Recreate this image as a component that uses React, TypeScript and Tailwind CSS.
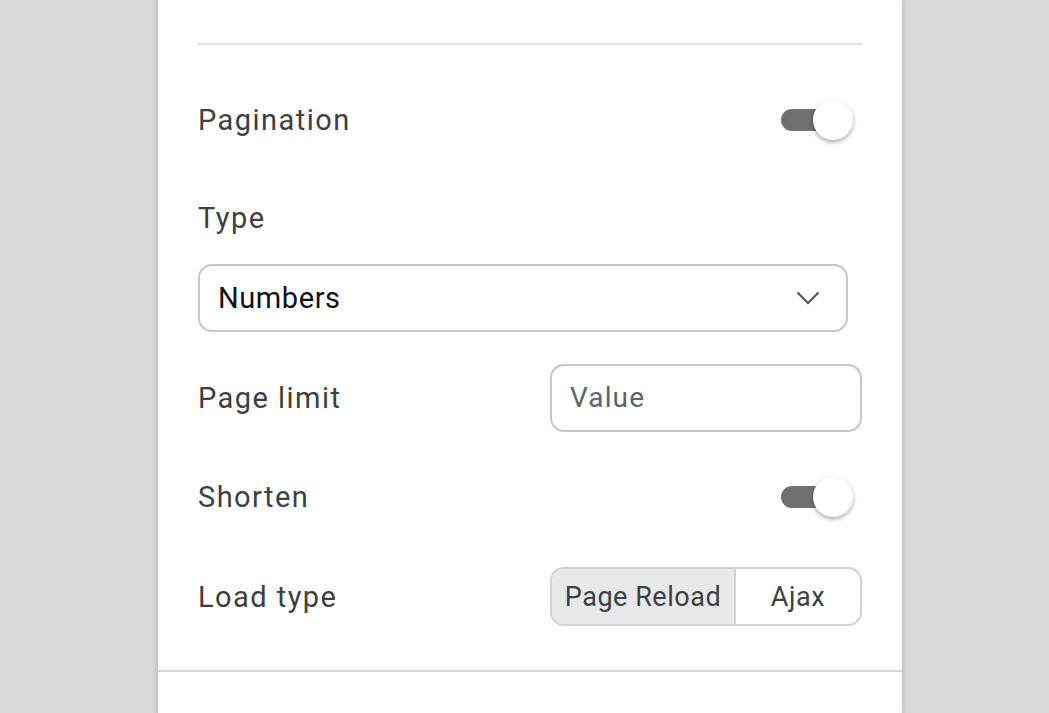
import React from "react";

function Toggle() {
  return (
    <div className="relative w-[72px] h-[44px] mr-[9px] flex items-center">
      <div className="absolute left-0 top-[11px] w-[62px] h-[22px] rounded-full bg-[#707070]" />
      <div className="absolute right-0 top-[2px] w-[40px] h-[40px] rounded-full bg-white shadow-[0_2px_4px_rgba(0,0,0,0.35)]" />
    </div>
  );
}

export default function App() {
  return (
    <div
      className="w-full h-[713px] bg-[#d9d9d9] overflow-hidden pl-[158px]"
      style={{ fontFamily: "Roboto, 'Noto Sans', sans-serif" }}
    >
      <div className="w-[744px] h-full bg-white shadow-[0_0_4px_2px_rgba(0,0,0,0.12)]">
        <div className="px-[40px] pt-[43px]">
          <div className="h-[2px] bg-[#e2e2e2]" />
          <div className="mt-[55px] h-[40px] flex items-center justify-between">
            <span className="pt-[2px] text-[29px] tracking-[0.05em] text-[#3c4043]">Pagination</span>
            <Toggle />
          </div>
          <div className="mt-[60px] h-[36px] flex items-center">
            <span className="pt-[2px] text-[29px] tracking-[0.05em] text-[#3c4043]">Type</span>
          </div>
          <div className="mt-[28px] w-[650px] h-[68px] border-2 border-[#c6c6c6] rounded-[14px] flex items-center justify-between pl-[18px] pr-[26px]">
            <span className="pt-[2px] text-[29px] tracking-[0.02em] text-[#111]">Numbers</span>
            <svg width="24" height="14" viewBox="0 0 24 14" fill="none">
              <path d="M1.5 1.5 L12 12 L22.5 1.5" stroke="#555" strokeWidth="2.2" />
            </svg>
          </div>
          <div className="mt-[32px] h-[68px] flex items-center justify-between">
            <span className="pt-[2px] text-[29px] tracking-[0.05em] text-[#3c4043]">Page limit</span>
            <div className="w-[312px] h-[68px] border-2 border-[#c6c6c6] rounded-[14px] flex items-center pl-[18px]">
              <span className="text-[28px] tracking-[0.04em] text-[#5f6368]">Value</span>
            </div>
          </div>
          <div className="mt-[45px] h-[40px] flex items-center justify-between">
            <span className="pt-[2px] text-[29px] tracking-[0.05em] text-[#3c4043]">Shorten</span>
            <Toggle />
          </div>
          <div className="mt-[50px] h-[59px] flex items-center justify-between">
            <span className="pt-[2px] text-[29px] tracking-[0.05em] text-[#3c4043]">Load type</span>
            <div className="w-[312px] h-[59px] border-2 border-[#d2d2d2] rounded-[14px] flex overflow-hidden">
              <div className="w-[184px] h-full bg-[#e8e8e8] border-r-2 border-[#d2d2d2] flex items-center justify-center">
                <span className="pt-[2px] text-[27px] tracking-[0.02em] text-[#3c4043]">Page Reload</span>
              </div>
              <div className="flex-1 h-full flex items-center justify-center">
                <span className="pt-[2px] text-[27px] tracking-[0.02em] text-[#3c4043]">Ajax</span>
              </div>
            </div>
          </div>
        </div>
        <div className="mt-[44px] h-[2px] bg-[#d6d6d6]" />
      </div>
    </div>
  );
}
